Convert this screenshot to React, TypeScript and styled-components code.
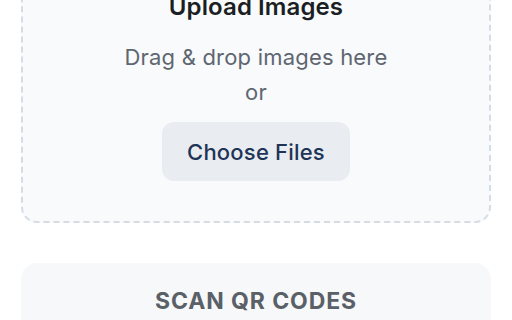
import React from "react";
import styled, { createGlobalStyle } from "styled-components";

const GlobalStyle = createGlobalStyle`
  html, body {
    margin: 0;
    padding: 0;
    background: #ffffff;
    font-family: Inter, "Noto Sans", "Liberation Sans", sans-serif;
    overflow: hidden;
  }
`;

const Page = styled.main`
  width: 512px;
  height: 320px;
  overflow: hidden;
  box-sizing: border-box;
  padding: 0 21px;
`;

const DropZone = styled.section`
  margin-top: -41px;
  box-sizing: border-box;
  border: 2px dashed #d6dce3;
  border-radius: 16px;
  background: #f8fafc;
  padding: 32px 24px 40px;
  display: flex;
  flex-direction: column;
  align-items: center;
  text-align: center;
`;

const Title = styled.h2`
  margin: 0 0 19px;
  font-size: 24px;
  line-height: 28px;
  font-weight: 600;
  letter-spacing: 0.1px;
  color: #1b1f24;
`;

const Hint = styled.p`
  margin: 0 0 12px;
  font-size: 22px;
  line-height: 35px;
  letter-spacing: 0.2px;
  color: #5f6670;
`;

const ChooseButton = styled.button`
  height: 59px;
  padding: 0 25px;
  border: none;
  border-radius: 12px;
  background: #e9ecf1;
  color: #1e3457;
  font-family: inherit;
  font-size: 22px;
  font-weight: 500;
  letter-spacing: 0.2px;
  cursor: pointer;
`;

const Card = styled.section`
  margin-top: 40px;
  border-radius: 16px;
  background: #f7f8f9;
  padding: 23px 24px;
  text-align: center;
`;

const CardTitle = styled.h3`
  margin: 0;
  font-size: 23px;
  line-height: 30px;
  font-weight: 700;
  letter-spacing: 0.9px;
  color: #5a6067;
`;

export default function App() {
  return (
    <Page>
      <GlobalStyle />
      <DropZone>
        <Title>Upload Images</Title>
        <Hint>
          Drag &amp; drop images here
          <br />
          or
        </Hint>
        <ChooseButton>Choose Files</ChooseButton>
      </DropZone>
      <Card>
        <CardTitle>SCAN QR CODES</CardTitle>
      </Card>
    </Page>
  );
}
